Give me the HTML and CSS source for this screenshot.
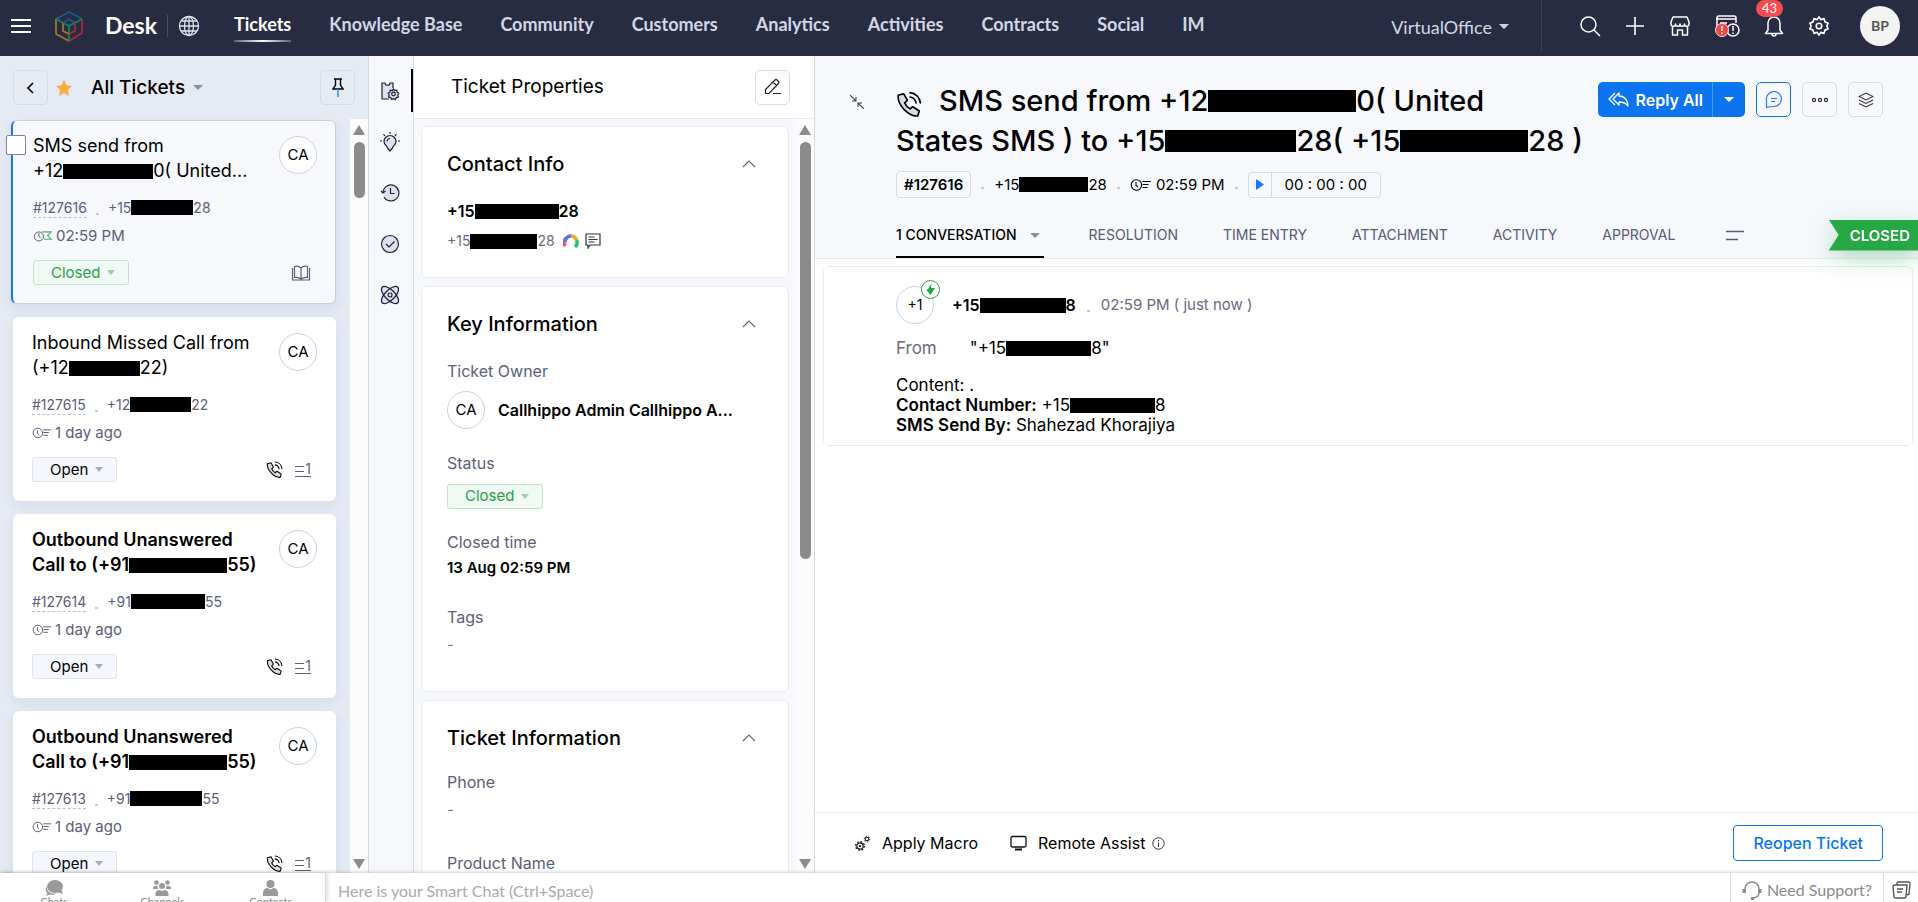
FILE: index.html
```
<!DOCTYPE html>
<html lang="en">
<head>
<meta charset="utf-8">
<title>Desk - Tickets</title>
<link rel="stylesheet" href="styles.css">
</head>
<body>
<svg class="defs" aria-hidden="true">
  <symbol id="i-call" viewBox="0 0 24 24"><path d="M2 4 7 2.500l3.500 6-2.500 2.500c1 2.500 3 4.500 5 5.500l2.500-2 6 4-1.500 4.500C12 24 1 13 2 4z" fill="#d9dbea"/><path d="M2 4 7 2.500l3.500 6-2.500 2.500c1 2.500 3 4.500 5 5.500l2.500-2 6 4-1.500 4.500C12 24 1 13 2 4zM13 1.500c5 .5 9 4.500 9.500 9.500M13 5.500c3 .5 5 2.500 5.500 5.500" fill="none" stroke="currentColor" stroke-width="1.500" stroke-linejoin="round" stroke-linecap="round"/></symbol>
  <symbol id="i-due" viewBox="0 0 22 14"><g fill="none" stroke="currentColor" stroke-width="1.100"><path d="M10 3.200a5.200 5.200 0 1 0 0 7.600M6 4v3.500l2 1.500M10 3.200a5.200 5.200 0 0 1 0 7.600"/><path d="M12.500 3.500h8.500M12.500 6.500h6M12.500 9.500h5"/></g></symbol>
  <symbol id="i-due-done" viewBox="0 0 22 14"><g fill="none" stroke="currentColor" stroke-width="1.100"><circle cx="6.500" cy="7.500" r="5"/><path d="M6.500 4v3.500l2 1.500"/></g><path d="M10 2.500h10l-4 4 4 4h-8" fill="none" stroke="#4fae68" stroke-width="1.200"/></symbol>
  <symbol id="i-up" viewBox="0 0 14 8"><path d="M1 7l6-6 6 6" fill="none" stroke="currentColor" stroke-width="1.100"/></symbol>
  <symbol id="i-gear" viewBox="0 0 24 24"><path d="M12 2l2 3 3.500-1 1 3.500 3.500 1.500-1.500 3 1.500 3-3.500 1.500-1 3.500-3.500-1-2 3-2-3-3.500 1-1-3.500L2 15l1.500-3L2 9l3.500-1.500 1-3.500 3.500 1z" fill="none" stroke="currentColor" stroke-width="1.800" stroke-linejoin="round"/><circle cx="12" cy="12" r="3" fill="none" stroke="currentColor" stroke-width="1.800"/></symbol>
</svg>

<header class="topbar">
  <button class="ghost menu" aria-label="Menu"><svg width="20" height="16" viewBox="0 0 20 16"><path d="M0 2h20M0 8h20M0 14h20" stroke="#fff" stroke-width="2"/></svg></button>
  <svg class="logo" width="30" height="32" viewBox="0 0 30 32" fill="none" stroke-width="1.700"><path d="M2 9 15 2l13 7" stroke="#21578f"/><path d="M2 9v15l13 7" stroke="#a57a2c"/><path d="M28 9v14l-13 8" stroke="#ad2a3c"/><path d="M2 9l13 7 13-7M15 16v15" stroke="#128a4d"/><path d="M9 13v8l6 3" stroke="#a57a2c"/><path d="M21 13v8l-6 3" stroke="#ad2a3c"/><path d="M9 13l6-4 6 4" stroke="#21578f"/></svg>
  <span class="brand">Desk</span>
  <button class="ghost globe" aria-label="Help center"><svg width="22" height="22" viewBox="0 0 22 22" fill="none" stroke="#dfe2ee" stroke-width="1.300"><circle cx="11" cy="11" r="9.500"/><ellipse cx="11" cy="11" rx="4.500" ry="9.500"/><path d="M11 1.500v19M1.500 11h19M3.500 6h15M3.500 16h15"/></svg></button>
  <nav class="modules">
    <a href="#" class="on">Tickets</a><a href="#">Knowledge Base</a><a href="#">Community</a><a href="#">Customers</a><a href="#">Analytics</a><a href="#">Activities</a><a href="#">Contracts</a><a href="#">Social</a><a href="#">IM</a>
  </nav>
  <button class="ghost dept">VirtualOffice <i class="caret"></i></button>
  <div class="tools">
    <button class="ghost" aria-label="Search"><svg width="22" height="22" viewBox="0 0 22 22" fill="none" stroke="#fff" stroke-width="1.500"><circle cx="9.500" cy="9.500" r="7.500"/><path d="M15 15l6 6"/></svg></button>
    <button class="ghost" aria-label="Add"><svg width="22" height="22" viewBox="0 0 22 22" stroke="#fff" stroke-width="1.600"><path d="M11 2v18M2 11h18"/></svg></button>
    <button class="ghost" aria-label="Marketplace"><svg width="22" height="22" viewBox="0 0 22 22" fill="none" stroke="#fff" stroke-width="1.500" stroke-linejoin="round"><path d="M4 2h14l2 5v2a2.250 2.250 0 0 1-4.500 0 2.250 2.250 0 0 1-4.500 0 2.250 2.250 0 0 1-4.500 0 2.250 2.250 0 0 1-4.500 0V7zM3.500 12v8h5v-5h5v5h5v-8"/></svg></button>
    <button class="ghost" aria-label="Violations"><svg width="26" height="24" viewBox="0 0 26 24" fill="none" stroke="#fff" stroke-width="1.500"><path d="M3 14V4a2 2 0 0 1 2-2h15a2 2 0 0 1 2 2v5M2 5h20M6 9h7"/><circle cx="19" cy="16" r="6" fill="#282c42"/><path d="M19 12v5M19 18.500v1.500"/><circle cx="8" cy="16" r="6.500" fill="#f04848" stroke="#ffd9d9" stroke-width="1"/><path d="M8 12v5M8 18.500v1.500"/></svg></button>
    <button class="ghost bell" aria-label="Notifications"><svg width="22" height="22" viewBox="0 0 22 22" fill="none" stroke="#fff" stroke-width="1.500" stroke-linejoin="round"><path d="M5 8a6 6 0 0 1 12 0v7l2.500 3.500h-17L5 15zM9 19a2 2 0 0 0 4 0"/></svg><span class="count">43</span></button>
    <button class="ghost" aria-label="Setup"><svg width="22" height="22"><use href="#i-gear"/></svg></button>
    <button class="me" aria-label="Profile">BP</button>
  </div>
</header>

<div class="work">
  <section class="list">
    <div class="list-head">
      <button class="box" aria-label="Back"><svg width="9" height="14" viewBox="0 0 9 14"><path d="M7 2 2 7l5 5" fill="none" stroke="#000" stroke-width="1.600"/></svg></button>
      <svg class="star" width="16" height="16" viewBox="0 0 16 16"><path d="M8 0l2.400 5.300 5.600.6-4.200 3.800L13 16l-5-3-5 3 1.200-6.300L0 5.900l5.600-.6z" fill="#f9ab3c"/></svg>
      <button class="ghost view">All Tickets <i class="caret"></i></button>
      <button class="box pin" aria-label="Pin"><svg width="12" height="20" viewBox="0 0 12 20"><path d="M2 1h8M3.500 1v6L1 11h10L8.500 7V1" fill="none" stroke="#000" stroke-width="1.400"/><path d="M6 11v8" stroke="#2b87d3" stroke-width="1.400"/></svg></button>
    </div>
    <div class="scroll">
      <div class="cards">
        <article class="card sel">
          <input type="checkbox" class="pick" aria-label="Select ticket #127616">
          <h3>SMS send from<br>+12<b class="cut" style="width:90px"></b>0( United...</h3><span class="av">CA</span>
          <p class="meta"><a href="#">#127616</a><i class="dot"></i><span>+15<b class="cut" style="width:62px"></b>28</span></p>
          <p class="when"><svg width="20" height="14"><use href="#i-due-done"/></svg>02:59 PM</p>
          <div class="foot"><button class="status done">Closed <i class="caret"></i></button><span class="acts"><svg width="20" height="16" viewBox="0 0 20 16" fill="none" stroke="#5b6078" stroke-width="1.200"><path d="M10 3C8 1 5 1 3.500 1.500v11C6 12 8 12.500 10 14c2-1.500 4-2 6.500-1.500v-11C15 1 12 1 10 3zM10 3v11M1.500 3v12h6l2.500 0h8.500V3"/></svg></span></div>
        </article>
        <article class="card">
          <h3>Inbound Missed Call from<br>(+12<b class="cut" style="width:71px"></b>22)</h3><span class="av">CA</span>
          <p class="meta"><a href="#">#127615</a><i class="dot"></i><span>+12<b class="cut" style="width:61px"></b>22</span></p>
          <p class="when"><svg width="20" height="14"><use href="#i-due"/></svg>1 day ago</p>
          <div class="foot"><button class="status">Open <i class="caret"></i></button><span class="acts"><svg width="17" height="17"><use href="#i-call"/></svg><span class="thr"><i></i>1</span></span></div>
        </article>
        <article class="card unread">
          <h3>Outbound Unanswered<br>Call to (+91<b class="cut" style="width:98px"></b>55)</h3><span class="av">CA</span>
          <p class="meta"><a href="#">#127614</a><i class="dot"></i><span>+91<b class="cut" style="width:74px"></b>55</span></p>
          <p class="when"><svg width="20" height="14"><use href="#i-due"/></svg>1 day ago</p>
          <div class="foot"><button class="status">Open <i class="caret"></i></button><span class="acts"><svg width="17" height="17"><use href="#i-call"/></svg><span class="thr"><i></i>1</span></span></div>
        </article>
        <article class="card unread">
          <h3>Outbound Unanswered<br>Call to (+91<b class="cut" style="width:98px"></b>55)</h3><span class="av">CA</span>
          <p class="meta"><a href="#">#127613</a><i class="dot"></i><span>+91<b class="cut" style="width:72px"></b>55</span></p>
          <p class="when"><svg width="20" height="14"><use href="#i-due"/></svg>1 day ago</p>
          <div class="foot"><button class="status">Open <i class="caret"></i></button><span class="acts"><svg width="17" height="17"><use href="#i-call"/></svg><span class="thr"><i></i>1</span></span></div>
        </article>
      </div>
      <div class="bar"><i class="arr up"></i><i class="thumb" style="height:7.500%"></i><i class="arr down"></i></div>
    </div>
  </section>

  <nav class="rail">
    <a href="#" class="on" aria-label="Ticket Properties"><svg width="20" height="20" viewBox="0 0 20 20" fill="#dfe0ee" stroke="#1d2030" stroke-width="1.200"><path d="M9 18H2V2h3c0 3 5 3 5 0h3v5"/><path d="M13.500 8l1.300 1.500 2-.3.300 2 1.700 1.100-1 1.700.5 2-2 .6-.9 1.800-1.900-.8-1.900.8-.9-1.800-2-.6.500-2-1-1.700 1.700-1.100.3-2 2 .3z"/><circle cx="13.500" cy="13" r="1.800"/></svg></a>
    <a href="#" aria-label="Insights"><svg width="20" height="20" viewBox="0 0 20 20" fill="none" stroke="#1d2030" stroke-width="1.200"><path d="M7.500 16c0-2-3.500-3-3.500-6.500a6 6 0 0 1 12 0c0 3.500-3.500 4.500-3.500 6.500L10 19z" fill="#dfe0ee"/><path d="M7 9.500a3 3 0 0 1 3-3M10 0v2M3.500 2 5 4M16.500 2 15 4M0 9h2M18 9h2"/></svg></a>
    <a href="#" aria-label="History"><svg width="20" height="20" viewBox="0 0 20 20" fill="none" stroke="#1d2030" stroke-width="1.200"><path d="M3 9a8 8 0 1 1 1 5" fill="#dfe0ee"/><path d="M10.500 5v5.500h4M1 8l2 2 2.500-2"/></svg></a>
    <a href="#" aria-label="Approvals"><svg width="20" height="20" viewBox="0 0 20 20" fill="#dfe0ee" stroke="#1d2030" stroke-width="1.200"><circle cx="10" cy="10" r="8.500"/><path d="M6 10l3 3 5.500-5.500" fill="none"/></svg></a>
    <a href="#" aria-label="Integrations"><svg width="20" height="20" viewBox="0 0 20 20" fill="#dfe0ee" stroke="#1d2030" stroke-width="1.200"><rect x="1.500" y="1.500" width="17" height="17" rx="4" stroke="none"/><ellipse cx="10" cy="10" rx="11" ry="5" transform="rotate(45 10 10)" fill="none"/><ellipse cx="10" cy="10" rx="11" ry="5" transform="rotate(-45 10 10)" fill="none"/><circle cx="10" cy="10" r="2"/></svg></a>
  </nav>

  <section class="props">
    <div class="props-head"><h2>Ticket Properties</h2><button class="box" aria-label="Edit"><svg width="18" height="18" viewBox="0 0 18 18" fill="none" stroke="#222" stroke-width="1.200"><path d="M1.500 15.500v-4L11 2q1-1 2 0l1.500 1.500q1 1 0 2L5 15.500zM9 4l3.500 3.500M9 15.500h8"/></svg></button></div>
    <div class="scroll">
      <div class="panels">
        <section class="panel contact">
          <h4>Contact Info<svg width="14" height="8"><use href="#i-up"/></svg></h4>
          <p class="name">+15<b class="cut" style="width:84px"></b>28</p>
          <p class="phone">+15<b class="cut" style="width:67px"></b>28<svg class="ring" width="16" height="15" viewBox="0 0 16 15" fill="none" stroke-width="3.500"><path d="M2.500 12A6 6 0 0 1 3 4" stroke="#f0507a"/><path d="M2 8A6 6 0 0 1 8 2" stroke="#4b78e8"/><path d="M8 2a6 6 0 0 1 5.500 4" stroke="#f7a823"/><path d="M13.500 6a6 6 0 0 1-1.500 7" stroke="#2dbd72"/></svg><svg width="16" height="16" viewBox="0 0 16 16" fill="none" stroke="#333" stroke-width="1.200"><path d="M1 1h14v11H5l-2 3v-3H1zM3.500 4h6M3.500 6.500h9M3.500 9h6"/></svg></p>
        </section>
        <section class="panel key">
          <h4>Key Information<svg width="14" height="8"><use href="#i-up"/></svg></h4>
          <dl>
            <dt>Ticket Owner</dt><dd class="owner"><span class="av">CA</span>Callhippo Admin Callhippo A...</dd>
            <dt>Status</dt><dd class="st"><button class="status done">Closed <i class="caret"></i></button></dd>
            <dt>Closed time</dt><dd class="closed-at">13 Aug 02:59 PM</dd>
            <dt>Tags</dt><dd class="none">-</dd>
          </dl>
        </section>
        <section class="panel">
          <h4>Ticket Information<svg width="14" height="8"><use href="#i-up"/></svg></h4>
          <dl>
            <dt>Phone</dt><dd class="none">-</dd>
            <dt>Product Name</dt><dd></dd>
          </dl>
        </section>
      </div>
      <div class="bar"><i class="arr up"></i><i class="thumb" style="height:56%"></i><i class="arr down"></i></div>
    </div>
  </section>

  <main class="detail">
    <div class="detail-head">
      <button class="ghost shrink" aria-label="Collapse"><svg width="14" height="14" viewBox="0 0 14 14" fill="none" stroke="#444" stroke-width="1.100"><path d="M0 0l6 6M6 2v4H2M14 14L8 8M8 12V8h4"/></svg></button>
      <div class="headline">
        <div class="title-row">
          <h1><svg width="26" height="26"><use href="#i-call"/></svg>SMS send from +12<b class="cut" style="width:148px"></b>0( United<br>States SMS ) to +15<b class="cut" style="width:131px"></b>28( +15<b class="cut" style="width:128px"></b>28 )</h1>
          <div class="buttons">
            <div class="split"><button><svg width="21" height="15" viewBox="0 0 21 15" fill="none" stroke="#fff" stroke-width="1.300" stroke-linejoin="round"><path d="M7 1 1 7l6 6M11 4V1L5 7l6 6v-3c4 0 7 1 9 4 0-5-3-10-9-10z"/></svg>Reply All</button><button class="more" aria-label="More replies"><i class="caret"></i></button></div>
            <button class="box blue" aria-label="Comment"><svg width="18" height="18" viewBox="0 0 18 18" fill="none" stroke="#2a78e4" stroke-width="1.200"><path d="M1.500 16.500V9A7.500 7.500 0 1 1 9 15.500q-4 0-7.500 1zM6 7.500h6M6 10.500h4"/></svg></button>
            <button class="box" aria-label="More actions"><svg width="18" height="6" viewBox="0 0 18 6" fill="none" stroke="#222" stroke-width="1.100"><circle cx="3" cy="3" r="1.600"/><circle cx="9" cy="3" r="1.600"/><circle cx="15" cy="3" r="1.600"/></svg></button>
            <button class="box" aria-label="Layers"><svg width="16" height="16" viewBox="0 0 16 16" fill="none" stroke="#333" stroke-width="1.100"><path d="M8 1l7 3.500L8 8 1 4.500z"/><path d="M1 8l7 3.500L15 8M1 11.500L8 15l7-3.500"/></svg></button>
          </div>
        </div>
        <div class="info"><span class="chip">#127616</span><i class="dot"></i><span>+15<b class="cut" style="width:69px"></b>28</span><i class="dot"></i><span class="due"><svg width="22" height="14"><use href="#i-due"/></svg>02:59 PM</span><i class="dot"></i><span class="timer"><button class="ghost" aria-label="Start timer"><svg width="8" height="11" viewBox="0 0 8 11"><path d="M0 0l8 5.500L0 11z" fill="#1677ff"/></svg></button><span>00 : 00 : 00</span></span></div>
        <nav class="tabs"><a href="#" class="on">1 CONVERSATION <i class="caret"></i></a><a href="#">RESOLUTION</a><a href="#">TIME ENTRY</a><a href="#">ATTACHMENT</a><a href="#">ACTIVITY</a><a href="#">APPROVAL</a><button class="ghost" aria-label="More tabs"><svg width="18" height="11" viewBox="0 0 18 11"><path d="M0 1.500h18M0 9.500h12" stroke="#555b70" stroke-width="1.300"/></svg></button><span class="ribbon"><span>CLOSED</span></span></nav>
      </div>
    </div>
    <div class="thread">
      <article class="msg">
        <div class="from"><span class="av">+1<span class="in"><svg width="9" height="11" viewBox="0 0 9 11"><path d="M5.500 0 5 4h4L4.500 11 0 5.500h2Q2.500 2 5.500 0z" fill="#22a843"/></svg></span></span><span class="name">+15<b class="cut" style="width:86px"></b>8</span><i class="dot"></i><time>02:59 PM ( just now )</time></div>
        <div class="sender"><span class="lbl">From</span><span>"+15<b class="cut" style="width:85px"></b>8"</span></div>
        <div class="body">Content: .<br><strong>Contact Number:</strong> +15<b class="cut" style="width:85px"></b>8<br><strong>SMS Send By:</strong> Shahezad Khorajiya</div>
      </article>
    </div>
    <footer class="actions">
      <button class="ghost"><svg width="17" height="17" viewBox="0 0 17 17" fill="none" stroke="#111"><circle cx="6" cy="11" r="3.200" stroke-width="1.200"/><circle cx="6" cy="11" r="4.400" stroke-width="1.200" stroke-dasharray="1.700 1.750"/><circle cx="6" cy="11" r=".8" fill="#111"/><circle cx="13" cy="4" r="1.800" stroke-width="1.100"/><circle cx="13" cy="4" r="2.800" stroke-width="1" stroke-dasharray="1.200 1.700"/></svg>Apply Macro</button>
      <button class="ghost"><svg width="17" height="16" viewBox="0 0 17 16" fill="none" stroke="#111" stroke-width="1.300"><rect x="1" y="1.500" width="15" height="10.500" rx="1.500"/><path d="M5 14.500h7" stroke-width="2"/></svg>Remote Assist<svg class="inf" width="13" height="13" viewBox="0 0 13 13" fill="none" stroke="#333" stroke-width="1"><circle cx="6.500" cy="6.500" r="5.700"/><path d="M6.500 5.500V10M6.500 3v1.300"/></svg></button>
      <button class="reopen">Reopen Ticket</button>
    </footer>
  </main>
</div>

<footer class="chatbar">
  <nav class="chat-tabs">
    <a href="#"><svg width="18" height="16" viewBox="0 0 18 16" fill="#999"><ellipse cx="10" cy="6.500" rx="8" ry="6.500"/><path d="M16 9l2 5-6-2z"/><path d="M1.500 6c-2 4 0 6 1 7l-1.500 3 4-1.500c3 .8 5 0 6-.8C5 14 1.500 11 1.500 6z"/></svg>Chats</a>
    <a href="#"><svg width="18" height="16" viewBox="0 0 18 16" fill="#999"><circle cx="3.500" cy="2.500" r="2.300"/><circle cx="14.500" cy="2.500" r="2.300"/><path d="M0 9V7.500Q1 5.500 4 5.500l1.500 3.500zM18 9V7.500q-1-2-4-2L12.500 9z"/><circle cx="9" cy="6" r="3"/><path d="M2.500 16v-3q1-3 4-3l2.500 1 2.500-1q3 0 4 3v3z"/></svg>Channels</a>
    <a href="#"><svg width="15" height="16" viewBox="0 0 15 16" fill="#999"><circle cx="7.500" cy="4" r="4"/><path d="M0 16v-4q1-4 4.500-4l3 1.500 3-1.500Q14 8 15 12v4z"/></svg>Contacts</a>
  </nav>
  <input type="text" class="smart" placeholder="Here is your Smart Chat (Ctrl+Space)" aria-label="Smart Chat">
  <button class="ghost help"><svg width="20" height="20" viewBox="0 0 20 20" fill="none" stroke="#8a8a8a" stroke-width="1.500"><path d="M3 13V9a7 7 0 0 1 14 0v4q0 4-6 5"/><path d="M2 9v4M18 9v4M9 18.500h3" stroke-width="3"/></svg>Need Support?</button>
  <button class="ghost notes" aria-label="Clipboard"><svg width="19" height="18" viewBox="0 0 19 18" fill="none" stroke="#555" stroke-width="1.400"><path d="M5 4V2q0-1 1-1h10q2 0 2 2l-1 10-2 1"/><path d="M3 4h12l-1 11q0 2-2 2H4q-2 0-2-2L1 6q0-2 2-2zM5 8h6M5 11h5"/></svg></button>
</footer>
</body>
</html>
```
FILE: styles.css
```
* { box-sizing: border-box; }
html, body { height: 100%; }
body { margin: 0; display: flex; flex-direction: column; overflow: hidden; font: 15px/20px Inter, sans-serif; color: #000; background: #fff; }
h1, h2, h3, h4, p, dl, dd { margin: 0; font-weight: 400; }
a { color: inherit; text-decoration: none; }
button, input { font: inherit; color: inherit; }
button { padding: 0; margin: 0; cursor: pointer; }
svg { flex: none; display: block; }
.defs { position: absolute; width: 0; height: 0; }
.ghost { background: none; border: 0; display: inline-flex; align-items: center; }
.caret { display: inline-block; flex: none; border: 5px solid transparent; border-top-color: currentColor; border-bottom: 0; }
.cut { display: inline-block; height: 15px; background: #000; vertical-align: -2px; }
.dot { flex: none; width: 3px; height: 2px; background: #c3c7d8; align-self: flex-end; margin-bottom: 5px; }
.av { display: flex; align-items: center; justify-content: center; flex: none; width: 38px; height: 38px; border: 1px solid #cfd0e2; border-radius: 50%; background: #fff; font-size: 15px; font-weight: 400; }
.box { display: flex; align-items: center; justify-content: center; flex: none; width: 35px; height: 35px; border: 1px solid #d5dce8; border-radius: 5px; background: transparent; }
.name { font-size: 16px; font-weight: 600; }

/* top bar */
.topbar { flex: none; display: flex; align-items: center; height: 56px; padding: 0 18px 4px 11px; background: #282c42; color: #fff; font-family: Lato, sans-serif; }
.logo { margin-left: 23px; }
.brand { margin-left: 21px; padding-bottom: 2px; font-size: 23px; font-weight: 700; line-height: 28px; }
.globe { margin-left: 10px; padding-left: 10px; border-left: 1px solid #4a4e63; }
.modules { display: flex; gap: 38px; margin-left: 34px; font-size: 18px; font-weight: 700; line-height: 24px; color: #d3d7e5; white-space: nowrap; }
.modules a { padding: 2px 0 4px; border-bottom: 2px solid transparent; }
.modules .on { color: #fff; border-image: linear-gradient(90deg, #4a5b70, #fff, #4a5b70) 1; }
.dept { margin-left: auto; align-self: stretch; gap: 7px; padding: 1px 32px 0 0; border-right: 1px solid #3a3e53; font-size: 18px; color: #d3d7e5; }
.tools { display: flex; align-items: center; gap: 23px; margin-left: 37px; }
.bell { position: relative; }
.count { position: absolute; top: -15px; left: -7px; min-width: 27px; padding: 0 6px; border-radius: 9px; background: #f44d4f; font-size: 13px; line-height: 17px; text-align: center; }
.me { width: 40px; height: 40px; margin-left: 7px; border: 0; border-radius: 50%; background: #f3f3f3; color: #555; font-size: 14px; font-weight: 700; }

.work { flex: 1; min-height: 0; display: flex; }
.scroll { flex: 1; min-height: 0; display: flex; overflow: hidden; }
.bar { flex: none; width: 18px; padding: 6px 0 4px; display: flex; flex-direction: column; align-items: center; background: #fcfcfc; }
.arr { border: 6px solid transparent; }
.arr.up { border-top: 0; border-bottom: 10px solid #8b8b8b; }
.arr.down { border-bottom: 0; border-top: 10px solid #8b8b8b; margin-top: auto; }
.thumb { width: 11px; margin-top: 7px; border-radius: 6px; background: #8b8b8b; }

/* ticket list */
.list { flex: none; width: 369px; display: flex; flex-direction: column; background: #e5eaf3; border-right: 1px solid #d3dae6; }
.list-head { flex: none; height: 63px; display: flex; align-items: center; padding: 0 13px; }
.star { margin-left: 8px; }
.view { gap: 8px; margin-left: 19px; font-size: 19px; font-weight: 500; }
.view .caret, .tabs .caret { color: #8a8f9c; }
.pin { margin-left: auto; }
.cards { flex: 1; overflow: hidden; display: flex; flex-direction: column; gap: 13px; padding: 1px 14px 0 13px; }
.card { position: relative; flex: none; display: grid; grid-template-columns: 1fr 38px; padding: 13px 19px 18px; border-radius: 6px; background: #fff; box-shadow: 0 4px 12px rgba(120, 135, 170, .14); }
.card.sel { margin-left: -2px; padding: 12px 18px 17px 20px; border: 1px solid #c9cbe0; border-left: 2px solid #1677ee; background: #f6f8fc; }
.card h3 { font-size: 18px; line-height: 25px; white-space: nowrap; }
.unread h3 { font-weight: 600; }
.card .av { margin-top: 3px; }
.meta, .when, .foot { grid-column: 1 / -1; display: flex; align-items: center; color: #5b6078; font-size: 15px; }
.card .meta { height: 24px; margin-top: 13px; font-size: 14px; }
.meta { gap: 9px; }
.meta a { border-bottom: 1px dashed #b9bcd6; line-height: 18px; }
.when { height: 24px; gap: 3px; margin-top: 4px; }
.foot { justify-content: space-between; height: 25px; margin-top: 12px; margin-bottom: 1px; padding-right: 6px; }
.status { display: inline-flex; align-items: center; gap: 7px; height: 25px; padding: 0 13px 0 17px; border: 1px solid #dde4f1; border-radius: 3px; background: #f5f7fc; color: #000; font-size: 15px; }
.status .caret { color: #a9acb3; border-width: 5px 4px 0; }
.status.done { border-color: #bfe5c9; background: #f0f9f3; color: #26a343; }
.status.done .caret { color: #a0cfae; }
.acts { display: flex; align-items: center; gap: 12px; color: #000; }
.thr { display: flex; gap: 1px; align-items: center; border-bottom: 1px solid #5b6078; font-size: 14px; line-height: 14px; color: #5b6078; }
.thr i { width: 9px; height: 6px; border: solid #5b6078; border-width: 1px 0; }
.pick { position: absolute; top: 14px; left: -7px; appearance: none; width: 20px; height: 20px; margin: 0; border: 1px solid #7d8295; border-radius: 2px; background: #fff; }

/* rail */
.rail { flex: none; width: 45px; padding-top: 13px; display: flex; flex-direction: column; gap: 8px; background: #f6f8fc; border-right: 1px solid #d3dae6; }
.rail a { display: flex; align-items: center; justify-content: center; height: 43px; border-right: 2px solid transparent; }
.rail .on { border-right-color: #000; }

/* properties */
.props { flex: none; width: 401px; display: flex; flex-direction: column; background: #f6f8fc; border-right: 1px solid #d3dae6; }
.props-head { flex: none; height: 63px; display: flex; align-items: center; justify-content: space-between; padding: 0 24px 0 37px; background: #fff; border-bottom: 1px solid #e6ebf3; }
.props-head h2 { font-size: 19px; }
.panels { flex: 1; overflow: hidden; display: flex; flex-direction: column; gap: 8px; padding: 7px 7px 0; }
.panel { flex: none; padding: 25px 25px 32px; border: 1px solid #e8edf4; border-radius: 6px; background: #fff; }
.panel h4 { display: flex; align-items: center; justify-content: space-between; padding-right: 7px; font-size: 20px; font-weight: 500; line-height: 24px; }
.panel h4 svg { color: #666; }
.contact .name { margin-top: 25px; line-height: 20px; }
.phone { display: flex; align-items: center; margin-top: 10px; line-height: 20px; color: #666b7d; font-size: 14px; }
.phone svg { margin-left: 6px; }
.phone .ring { margin-left: 8px; }
.panel.contact { padding-bottom: 26px; }
.panel dl { display: flex; flex-direction: column; }
.panel dt { font-size: 16px; line-height: 22px; color: #5b6078; margin-top: 21px; }
.key h4 { margin-bottom: 3px; }
.panel dd { font-size: 16px; line-height: 24px; }
.panel .owner { display: flex; align-items: center; gap: 13px; margin: 9px 0 2px; font-weight: 600; line-height: 20px; white-space: nowrap; }
.panel .st { margin: 9px 0 1px; }
.panel .closed-at { margin: 3px 0 5px; font-size: 15px; font-weight: 600; }
.panel .none { margin: 5px 0 9px; font-size: 15px; color: #777c8c; }
.key .none { margin-bottom: 2px; }

/* detail */
.detail { flex: 1; min-width: 0; display: flex; flex-direction: column; }
.detail-head { flex: none; display: flex; padding-left: 35px; background: #f6f8fc; border-bottom: 1px solid #e3ebf2; }
.shrink { width: 46px; height: 14px; margin-top: 39px; }
.headline { flex: 1; min-width: 0; padding-top: 25px; }
.title-row { display: flex; justify-content: space-between; padding-right: 35px; }
h1 { font-size: 29px; line-height: 40px; font-weight: 500; white-space: nowrap; }
h1 svg { display: inline-block; margin-right: 17px; vertical-align: -6px; }
h1 .cut { height: 22px; vertical-align: -1px; }
.buttons { display: flex; gap: 11px; margin-top: 1px; margin-left: -200px; }
.split { display: flex; height: 35px; background: #0b74ee; color: #fff; border-radius: 5px; font-size: 16px; font-weight: 600; }
.split button { display: flex; align-items: center; gap: 7px; padding: 0 9px 0 10px; border: 0; background: none; white-space: nowrap; }
.split .more { padding: 0 11px; border-left: 1px solid #4a98f5; }
.box.blue { border-color: #0b74ee; }
.info { display: flex; align-items: center; gap: 10px; height: 27px; margin-top: 10px; font-size: 15px; white-space: nowrap; }
.info .dot { margin-bottom: 9px; }
.chip { padding: 3px 7px; border: 1px solid #d3dbe7; border-radius: 4px; font-weight: 600; line-height: 19px; }
.due { display: flex; align-items: center; gap: 4px; }
.timer { display: flex; align-items: center; border: 1px solid #d3dbe7; border-radius: 4px; line-height: 24px; }
.timer button { padding: 0 7px; height: 24px; border-right: 1px solid #d3dbe7; }
.timer > span { padding: 0 13px; }
.tabs { display: flex; align-items: center; gap: 45px; height: 46px; margin-top: 14px; font-size: 14px; color: #555b70; white-space: nowrap; }
.tabs a { display: flex; align-items: center; gap: 13px; height: 46px; padding-top: 2px; border-bottom: 2px solid transparent; }
.tabs .on { color: #000; font-weight: 500; border-color: #000; padding-right: 4px; }
.tabs button { margin-left: 6px; }
.ribbon { margin-left: auto; filter: drop-shadow(0 8px 12px rgba(40, 170, 70, .35)); }
.ribbon span { display: block; padding: 0 8px 0 21px; background: #28a745; color: #fff; font-weight: 600; font-size: 15px; line-height: 31px; clip-path: polygon(0 0, 100% 0, 100% 100%, 0 100%, 10px 50%); }
.thread { flex: 1; min-height: 0; overflow: hidden; padding: 7px 5px 0 8px; }
.msg { padding: 19px 72px 10px; border: 1px solid #e8eef4; border-radius: 5px; }
.from { display: flex; align-items: center; font-size: 15px; gap: 11px; }
.from .av { position: relative; margin-right: 7px; font-size: 14px; }
.in { position: absolute; top: -7px; right: -7px; display: flex; align-items: center; justify-content: center; width: 19px; height: 19px; border: 1px solid #22a843; border-radius: 50%; background: #fff; }
.from .dot { margin-bottom: 12px; }
time { color: #666b7d; }
.sender { display: flex; gap: 33px; margin-top: 14px; font-size: 17px; }
.lbl { color: #666b7d; }
.body { margin-top: 17px; font-size: 17px; line-height: 20px; }
.body strong { font-weight: 600; }
.actions { flex: none; display: flex; align-items: center; gap: 32px; height: 61px; padding: 0 35px 0 39px; border-top: 1px solid #e3ebf2; font-size: 16px; }
.actions .ghost { gap: 11px; }
.actions .inf { margin-left: -4px; }
.reopen { margin-left: auto; height: 36px; padding: 0 19px; border: 1px solid #0b74ee; border-radius: 4px; background: #fff; color: #0b74ee; font-weight: 500; }

/* chat bar */
.chatbar { flex: none; position: relative; display: flex; align-items: stretch; height: 29px; background: #fff; box-shadow: 0 0 4px rgba(0, 0, 0, .3); font-family: Lato, sans-serif; color: #8a8a8a; }
.chat-tabs { flex: none; width: 326px; display: flex; border-right: 1px solid #ddd; box-shadow: 2px 0 4px rgba(0, 0, 0, .12); }
.chat-tabs a { flex: 1; display: flex; flex-direction: column; align-items: center; padding-top: 7px; overflow: hidden; font-size: 11px; line-height: 12px; }
.smart { flex: 1; min-width: 0; padding: 6px 12px 0; border: 0; outline: 0; background: none; font-size: 16px; }
.smart::placeholder { color: #aaa; }
.help { gap: 5px; padding: 5px 11px 0; border-left: 1px solid #ddd; font-size: 16px; }
.notes { padding: 5px 7px 0 8px; border-left: 1px solid #ddd; }
```
